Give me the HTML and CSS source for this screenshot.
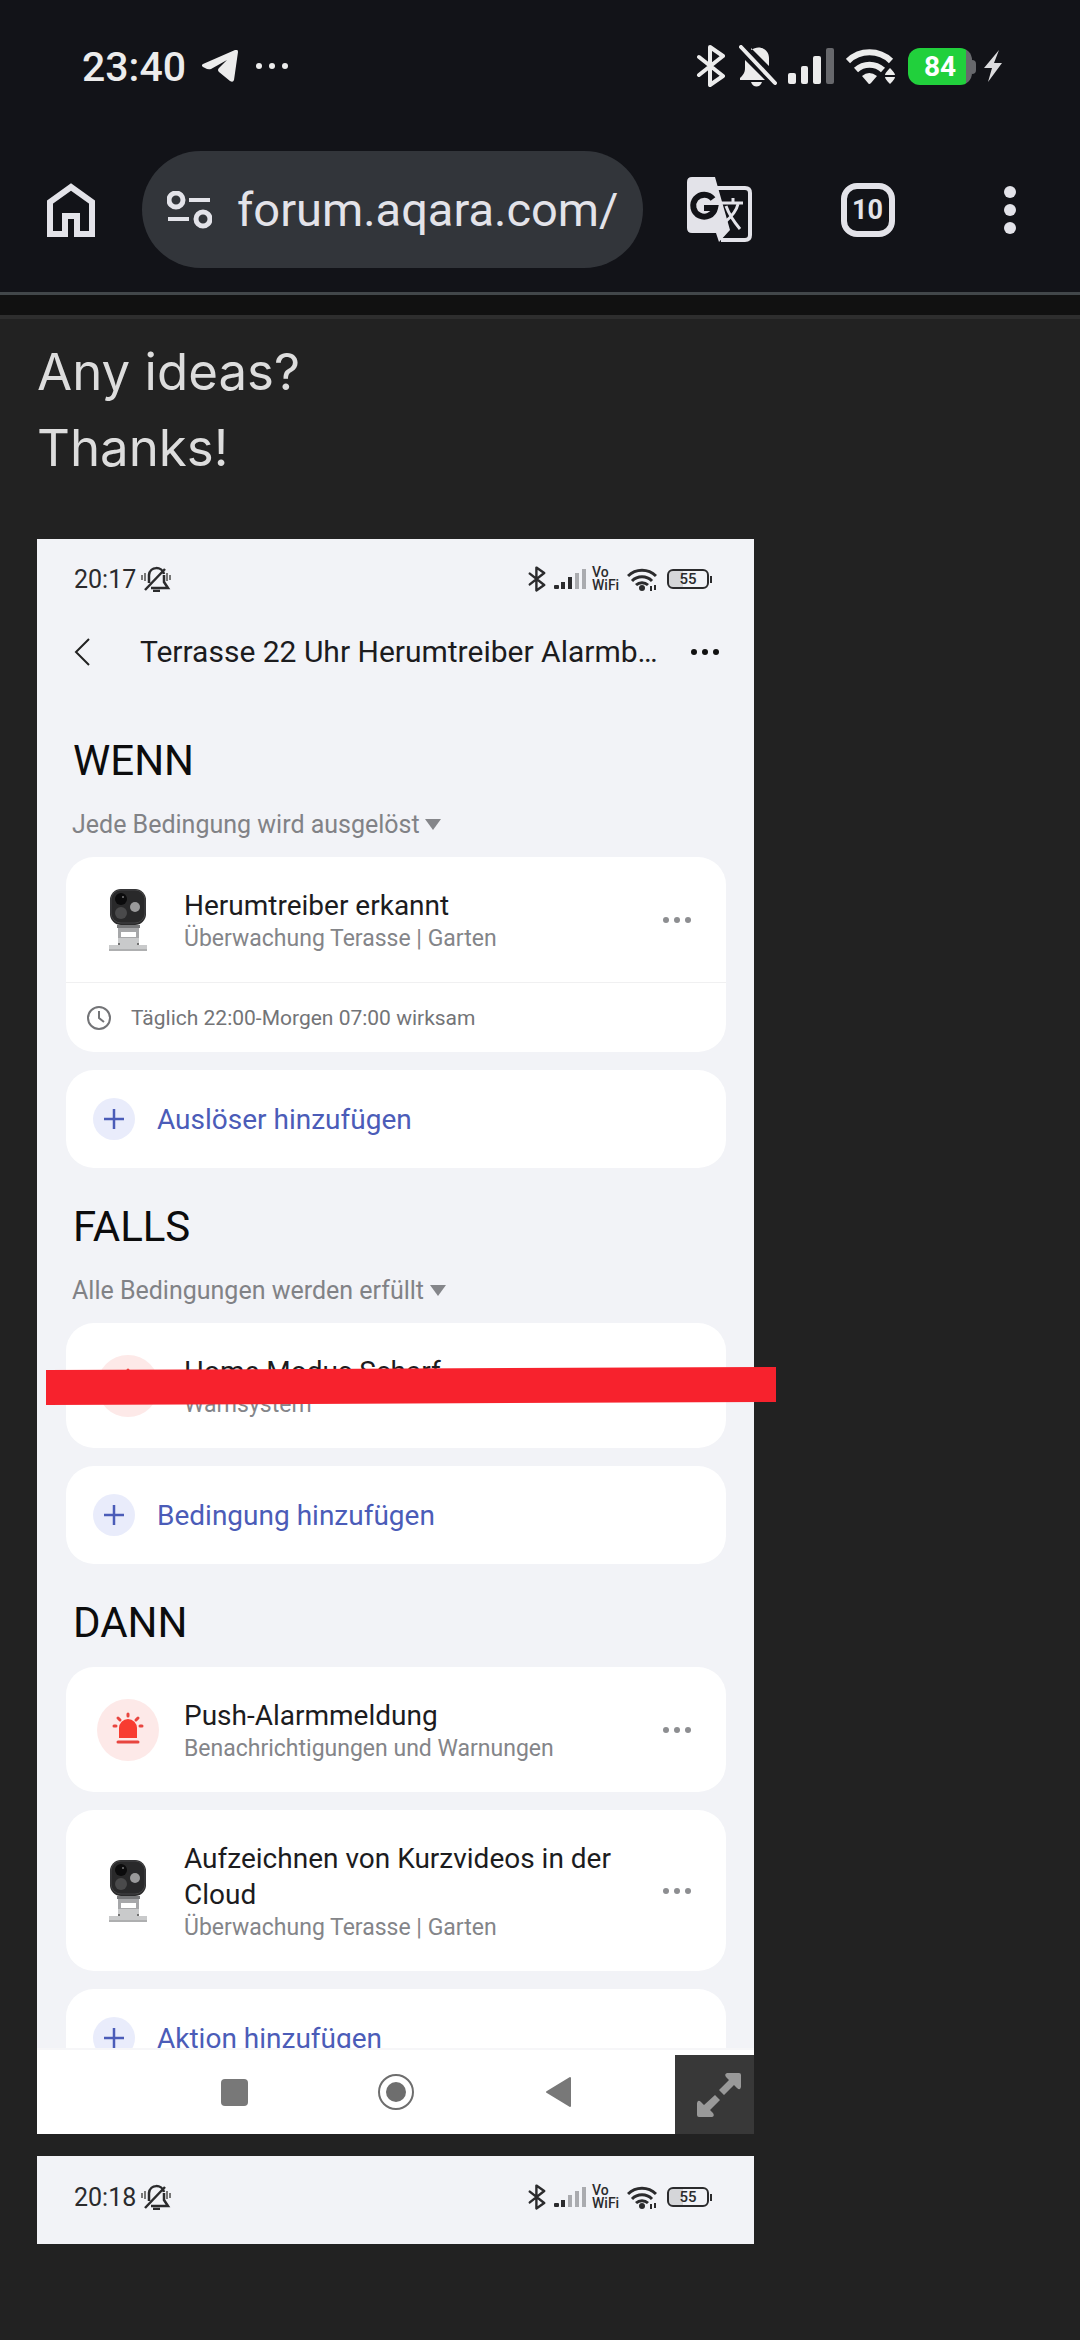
FILE: index.html
```html
<!DOCTYPE html>
<html lang="en">
<head>
<meta charset="utf-8">
<meta name="viewport" content="width=device-width, initial-scale=1">
<title>forum.aqara.com</title>
<link rel="stylesheet" href="styles.css">
</head>
<body>
<svg class="sprite" aria-hidden="true">
  <symbol id="bluetooth" viewBox="0 0 30 42"><path d="M3 12l24 19-13 9V2l13 9L3 30" fill="none" stroke="currentColor" stroke-width="4" stroke-linejoin="round" stroke-linecap="round"/></symbol>
  <symbol id="bell-off" viewBox="0 0 38 42"><path d="M12 5C20-1 30 4 30 13v8L12 3zM6 15l20 20H1v-2c3-3 5-5 5-10zM12 37h11c-2 6-9 6-11 0z" fill="currentColor"/><path d="M2 2l34 36" stroke="currentColor" stroke-width="4" stroke-linecap="round"/></symbol>
  <symbol id="wifi" viewBox="0 0 50 36"><path d="M2 13a31 31 0 0 1 43 0" fill="none" stroke="currentColor" stroke-width="6"/><path d="M10 22a20 20 0 0 1 27 0" fill="none" stroke="currentColor" stroke-width="6"/><path d="M16 28q7-6 15 0l-6 7q-2 2-3 0zM39 27q0-2 5-7 5 5 5 7zM39 29h10q0 2-5 7-5-5-5-7z" fill="currentColor"/></symbol>
  <symbol id="bell-vibrate" viewBox="0 0 30 26"><path d="M8 17V9c1-9 13-9 15-1M24 3L4 24M23 9v7l4 6H10M12 25h7" fill="none" stroke="currentColor" stroke-width="2.5"/><path d="M1 9v5M4 7v8M26 7v8M29 9v5" stroke="#777" stroke-width="2"/></symbol>
  <symbol id="wifi-small" viewBox="0 0 30 23"><path d="M1 8a20 20 0 0 1 28 0M5 13a14 14 0 0 1 20 0M9 17a9 9 0 0 1 12 0" fill="none" stroke="currentColor" stroke-width="3"/><circle cx="15" cy="20" r="3" fill="currentColor"/><path d="M24 18v5M28 17v5" stroke="currentColor" stroke-width="2"/></symbol>
  <symbol id="dots" viewBox="0 0 30 8"><circle cx="4" cy="4" r="3"/><circle cx="15" cy="4" r="3"/><circle cx="26" cy="4" r="3"/></symbol>
  <symbol id="plus" viewBox="0 0 42 42"><circle cx="21" cy="21" r="21" fill="#e9ecfb"/><path d="M11 21h20M21 11v20" stroke="#4b5cb8" stroke-width="2.5"/></symbol>
  <symbol id="caret" viewBox="0 0 16 11"><path d="M0 0h16L8 11z" fill="#85868a"/></symbol>
  <symbol id="camera" viewBox="0 0 38 64">
    <path d="M9 39h21v17H9z" fill="#a6a7a9"/><path d="M12 44h15v5H12z" fill="#fff"/><path d="M8 37h23v3H8z" fill="#77787a"/><path d="M9 50h21v7h8v6H0v-6h9z" fill="#c9cacb"/><path d="M0 61h38v2H0z" fill="#aeafb0"/>
    <circle cx="10" cy="56" r="1" fill="#555"/><circle cx="29" cy="56" r="1" fill="#555"/>
    <rect x="1" y="1" width="36" height="36" rx="11" fill="#29292a"/><rect x="2" y="2" width="34" height="33" rx="10" fill="none" stroke="#454546"/>
    <circle cx="12" cy="11" r="6" fill="#0b0b0c"/><circle cx="14" cy="9" r="1" fill="#777"/><circle cx="12" cy="25" r="6" fill="#4a4a4b"/><circle cx="26" cy="19" r="5" fill="#9a9a9b"/>
  </symbol>
  <symbol id="siren" viewBox="0 0 62 62"><circle cx="31" cy="31" r="31" fill="#fde9e8"/><path d="M22 39V29a9 9 0 0 1 18 0v10z" fill="#f83c31"/><path d="M21 43h20" stroke="#e8453f" stroke-width="3" stroke-linecap="round"/><path d="M31 15v2M21 19l2 2M41 19l-2 2M17 27h2M43 27h2" stroke="#e8453f" stroke-width="3" stroke-linecap="round"/></symbol>
</svg>

<header class="chrome">
  <div class="status">
    <span class="status-time">23:40</span>
    <svg class="i-telegram" viewBox="0 0 36 32"><path d="M1 14L33 0q3-1 3 2l-4 28q-1 3-4 1L17 22q-2-2 0-4l8-8-16 9q-3 1-6-1-5-2-2-4z" fill="currentColor"/></svg>
    <svg class="i-more" viewBox="0 0 34 8"><g fill="currentColor"><circle cx="4" cy="4" r="3"/><circle cx="17" cy="4" r="3"/><circle cx="30" cy="4" r="3"/></g></svg>
    <div class="status-icons">
      <svg class="i-bt"><use href="#bluetooth"/></svg>
      <svg class="i-bell"><use href="#bell-off"/></svg>
      <svg class="i-signal" viewBox="0 0 46 36"><g fill="currentColor"><rect y="25" width="8" height="11" rx="2"/><rect x="13" y="18" width="7" height="18" rx="2"/><rect x="25" y="8" width="8" height="28" rx="2"/><rect x="38" width="8" height="36" rx="2" fill="#67686c"/></g></svg>
      <svg class="i-wifi"><use href="#wifi"/></svg>
      <span class="battery"><span class="battery-level">84</span></span>
      <svg class="i-bolt" viewBox="0 0 20 32"><path d="M16 0L1 18h8L5 32l14-19h-8z" fill="#dcdcde"/></svg>
    </div>
  </div>
  <nav class="toolbar">
    <button class="tool tool-home" aria-label="Home"><svg width="48" height="54" viewBox="0 0 48 54"><path d="M3 51V19L24 4l21 15v32H30V33H18v18z" fill="none" stroke="currentColor" stroke-width="6"/></svg></button>
    <div class="address">
      <button class="tool tool-site" aria-label="Site settings"><svg width="45" height="38" viewBox="0 0 45 38"><g fill="none" stroke="currentColor"><circle cx="9" cy="9" r="7" stroke-width="5"/><circle cx="36" cy="28" r="7" stroke-width="5"/><path d="M22 9h21M1 28h21" stroke-width="4"/></g></svg></button>
      <input class="url" type="text" value="forum.aqara.com/" aria-label="Address">
    </div>
    <button class="tool tool-translate" aria-label="Translate"><svg width="65" height="65" viewBox="0 0 65 65">
      <path d="M30 11h28q5 0 5 5v42q0 5-5 5H34" fill="none" stroke="currentColor" stroke-width="4"/>
      <path d="M5 0h23l15 53-11 12-3-9H5q-5 0-5-5V5q0-5 5-5z" fill="currentColor"/>
      <path d="M26 22a11 11 0 1 0 2 9H17" fill="none" stroke="#121318" stroke-width="6"/>
      <path d="M46 21v5M51 27q-2 9-13 18M39 29q4 11 14 23" fill="none" stroke="currentColor" stroke-width="3"/><path d="M35 26h21" stroke="currentColor" stroke-width="3"/>
    </svg></button>
    <button class="tool tool-tabs" aria-label="Open tabs"><span class="tab-count">10</span></button>
    <button class="tool tool-menu" aria-label="Menu"><svg width="12" height="48" viewBox="0 0 12 48"><g fill="currentColor"><circle cx="6" cy="6" r="6"/><circle cx="6" cy="24" r="6"/><circle cx="6" cy="42" r="6"/></g></svg></button>
  </nav>
</header>

<main class="post">
  <p class="post-text">Any ideas?<br>Thanks!</p>

  <section class="shot">
    <div class="phone-status">
      <span>20:17</span><svg class="p-bell"><use href="#bell-vibrate"/></svg>
      <div class="phone-icons">
        <svg class="p-bt"><use href="#bluetooth"/></svg>
        <svg class="p-signal" viewBox="0 0 32 22"><g fill="#2b2b2d"><rect y="17" width="5" height="4" rx="1"/><rect x="7" y="14" width="4" height="7"/><rect x="14" y="9" width="4" height="12"/><g fill="#aaabaf"><rect x="21" y="5" width="4" height="16"/><rect x="28" y="1" width="4" height="20"/></g></g></svg>
        <span class="vowifi">Vo<br>WiFi</span>
        <svg class="p-wifi"><use href="#wifi-small"/></svg>
        <span class="p-battery">55</span>
      </div>
    </div>
    <div class="phone-title">
      <button class="plain" aria-label="Zurück"><svg width="17" height="30" viewBox="0 0 17 30"><path d="M15 2L2 15l13 13" fill="none" stroke="#222" stroke-width="2"/></svg></button>
      <h1>Terrasse 22 Uhr Herumtreiber Alarmb…</h1>
      <button class="plain more-dark" aria-label="Mehr"><svg class="p-dots"><use href="#dots"/></svg></button>
    </div>

    <div class="rules">
      <h2>WENN</h2>
      <div class="condition"><select aria-label="Auslöser"><option>Jede Bedingung wird ausgelöst</option></select><svg class="p-caret"><use href="#caret"/></svg></div>
      <div class="cards">
        <article class="card">
          <div class="entry">
            <span class="entry-icon"><svg class="p-camera"><use href="#camera"/></svg></span>
            <div class="entry-text"><h3>Herumtreiber erkannt</h3><p>Überwachung Terasse | Garten</p></div>
            <button class="plain" aria-label="Optionen"><svg class="p-dots"><use href="#dots"/></svg></button>
          </div>
          <div class="schedule"><svg width="24" height="24" viewBox="0 0 24 24"><g fill="none" stroke="#737477" stroke-width="2"><circle cx="12" cy="12" r="11"/><path d="M12 5v7l5 4"/></g></svg>Täglich 22:00-Morgen 07:00 wirksam</div>
        </article>
        <button class="card add"><svg class="p-plus"><use href="#plus"/></svg>Auslöser hinzufügen</button>
      </div>

      <h2>FALLS</h2>
      <div class="condition"><select aria-label="Bedingung"><option>Alle Bedingungen werden erfüllt</option></select><svg class="p-caret"><use href="#caret"/></svg></div>
      <div class="cards">
        <article class="card struck">
          <div class="entry">
            <span class="entry-icon"><svg class="p-siren"><use href="#siren"/></svg></span>
            <div class="entry-text"><h3>Home Modus Scharf</h3><p>Warnsystem</p></div>
          </div>
        </article>
        <button class="card add"><svg class="p-plus"><use href="#plus"/></svg>Bedingung hinzufügen</button>
      </div>

      <h2>DANN</h2>
      <div class="cards">
        <article class="card">
          <div class="entry">
            <span class="entry-icon"><svg class="p-siren"><use href="#siren"/></svg></span>
            <div class="entry-text"><h3>Push-Alarmmeldung</h3><p>Benachrichtigungen und Warnungen</p></div>
            <button class="plain" aria-label="Optionen"><svg class="p-dots"><use href="#dots"/></svg></button>
          </div>
        </article>
        <article class="card">
          <div class="entry">
            <span class="entry-icon"><svg class="p-camera"><use href="#camera"/></svg></span>
            <div class="entry-text"><h3>Aufzeichnen von Kurzvideos in der Cloud</h3><p>Überwachung Terasse | Garten</p></div>
            <button class="plain" aria-label="Optionen"><svg class="p-dots"><use href="#dots"/></svg></button>
          </div>
        </article>
        <div class="cutoff"><button class="card add"><svg class="p-plus"><use href="#plus"/></svg>Aktion hinzufügen</button></div>
      </div>
    </div>

    <nav class="phone-nav">
      <button class="plain" aria-label="Übersicht"><svg width="36" height="36" viewBox="0 0 36 36"><rect x="5" y="5" width="27" height="27" rx="4" fill="#787878"/></svg></button>
      <button class="plain" aria-label="Startseite"><svg width="36" height="36" viewBox="0 0 36 36"><circle cx="18" cy="18" r="17" fill="none" stroke="#6e6e6e" stroke-width="2"/><circle cx="18" cy="18" r="10" fill="#6e6e6e"/></svg></button>
      <button class="plain" aria-label="Zurück"><svg width="36" height="36" viewBox="0 0 36 36"><path d="M30 4v28L7 18z" fill="#787878" stroke="#787878" stroke-width="2" stroke-linejoin="round"/></svg></button>
    </nav>
    <button class="expand" aria-label="Expand"><svg width="44" height="44" viewBox="0 0 44 44"><path d="M30 0h12q2 0 2 2v12q-1 4-4 1l-3-3-10 10-5-5L32 7l-3-3q-2-3 1-4zM18 22l5 5-10 10 3 3q2 3-1 4H2q-2 0-2-2V30q1-4 4-1l3 3z" fill="#999"/></svg></button>
  </section>

  <section class="shot">
    <div class="phone-status">
      <span>20:18</span><svg class="p-bell"><use href="#bell-vibrate"/></svg>
      <div class="phone-icons">
        <svg class="p-bt"><use href="#bluetooth"/></svg>
        <svg class="p-signal" viewBox="0 0 32 22"><g fill="#2b2b2d"><rect y="17" width="5" height="4" rx="1"/><rect x="7" y="14" width="4" height="7"/><g fill="#aaabaf"><rect x="14" y="9" width="4" height="12"/><rect x="21" y="5" width="4" height="16"/><rect x="28" y="1" width="4" height="20"/></g></g></svg>
        <span class="vowifi">Vo<br>WiFi</span>
        <svg class="p-wifi"><use href="#wifi-small"/></svg>
        <span class="p-battery">55</span>
      </div>
    </div>
  </section>
</main>
</body>
</html>
```

FILE: styles.css
```css
* { box-sizing: border-box; }
body { margin: 0; min-height: 100vh; background: #222; font-family: Roboto, sans-serif; }
h1, h2, h3, p { margin: 0; font-weight: 400; }
svg { display: block; flex: none; }
button, input, select { font: inherit; color: inherit; background: none; border: 0; padding: 0; margin: 0; }
.sprite { position: absolute; width: 0; height: 0; }

/* Browser chrome */
.chrome { background: #121318; color: #e3e3e9; border-bottom: 3px solid #42474a; padding-bottom: 24px; }
.status { display: flex; align-items: center; height: 132px; padding: 0 77px 0 82px; color: #ececec; }
.status-time { font-size: 41px; font-weight: 500; line-height: 48px; padding-top: 2px; }
.i-telegram { width: 36px; height: 32px; margin-left: 16px; }
.i-more { width: 34px; height: 8px; margin-left: 17px; }
.status-icons { display: flex; align-items: center; margin-left: auto; }
.i-bt { width: 30px; height: 42px; margin-right: 13px; }
.i-bell { width: 38px; height: 42px; margin-right: 11px; }
.i-signal { width: 46px; height: 36px; margin-right: 12px; }
.i-wifi { width: 50px; height: 36px; margin-right: 12px; }
.battery { position: relative; width: 64px; height: 37px; border-radius: 12px; background: linear-gradient(90deg, #21d03c 58px, #67686c 58px); margin-right: 11px; display: flex; }
.battery::after { content: ""; position: absolute; left: 64px; top: 12px; width: 4px; height: 14px; border-radius: 0 4px 4px 0; background: #67686c; }
.battery-level { flex: 1; text-align: center; font-size: 28px; font-weight: 700; line-height: 37px; color: #fff; }
.i-bolt { width: 20px; height: 32px; }
.toolbar { display: flex; align-items: center; margin-top: 19px; }
.tool { display: flex; justify-content: center; align-items: center; }
.tool-home { width: 142px; height: 117px; }
.address { flex: 1; min-width: 0; display: flex; align-items: center; height: 117px; border-radius: 59px; background: #32353a; padding: 0 16px 0 25px; }
.tool-site { margin-right: 25px; }
.url { flex: 1; min-width: 0; font-size: 47px; line-height: 60px; }
.tool-translate { width: 153px; height: 117px; }
.tool-tabs { width: 143px; height: 117px; }
.tab-count { width: 54px; height: 54px; border: 6px solid #e3e3e9; border-radius: 16px; font-size: 27px; font-weight: 700; line-height: 42px; text-align: center; }
.tool-menu { width: 141px; height: 117px; }

/* Forum post */
.post { border-top: 20px solid #111; box-shadow: inset 0 4px 0 #2e2e2e; padding: 19px 37px 96px; display: flex; flex-direction: column; gap: 22px; }
.post-text { font-family: Inter, sans-serif; font-size: 51px; line-height: 76px; color: #ddd; padding-bottom: 31px; }
.shot { position: relative; width: 100%; max-width: 717px; background: #f2f3f7; color: #1c1c1e; }

/* Phone screenshot */
.phone-status { display: flex; align-items: center; height: 80px; padding: 0 41px 0 37px; font-size: 25px; color: #2b2b2d; }
.shot:last-child .phone-status { height: 88px; padding-bottom: 6px; }
.p-bell { width: 30px; height: 26px; margin-left: 5px; }
.phone-icons { display: flex; align-items: center; margin-left: auto; }
.p-bt { width: 18px; height: 26px; margin-right: 8px; }
.p-signal { width: 32px; height: 22px; margin-right: 6px; }
.vowifi { width: 29px; font-size: 14px; font-weight: 500; line-height: 13px; margin-right: 6px; }
.p-wifi { width: 30px; height: 23px; margin-right: 10px; }
.p-battery { position: relative; width: 42px; height: 20px; border: 2px solid #2b2b2d; border-radius: 6px; font-size: 15px; font-weight: 500; line-height: 16px; text-align: center; background: linear-gradient(90deg, #d5d6d9 14px, transparent 14px); margin-right: 4px; }
.p-battery::after { content: ""; position: absolute; right: -5px; top: 5px; width: 2px; height: 7px; background: #2b2b2d; }
.phone-title { display: flex; align-items: center; height: 66px; padding: 0 34px 0 37px; }
.phone-title h1 { flex: 1; margin-left: 49px; font-size: 30px; line-height: 36px; white-space: nowrap; }
.p-dots { width: 30px; height: 8px; fill: #8d8e91; }
.more-dark .p-dots { fill: #111; }
.rules { padding: 52px 28px 0 29px; }
h2 { font-size: 42px; line-height: 48px; margin: 0 0 20px 7px; color: #0c0c0d; }
.cards + h2 { margin-top: 35px; }
.condition { display: flex; align-items: center; gap: 5px; margin: 0 0 14px 6px; font-size: 25px; color: #818286; }
.condition select { appearance: none; height: 38px; }
.p-caret { width: 16px; height: 11px; }
.cards { display: flex; flex-direction: column; gap: 18px; }
.card { width: 100%; border-radius: 28px; background: #fff; }
.entry { display: flex; align-items: center; padding: 29px 34px 29px 31px; }
.entry-icon { display: flex; justify-content: center; width: 62px; margin-right: 25px; }
.entry-text { flex: 1; min-width: 0; padding-top: 2px; }
h3 { font-size: 28px; line-height: 36px; }
.entry-text p { font-size: 23px; line-height: 29px; color: #848589; }
.p-camera { width: 38px; height: 64px; }
.p-siren { width: 62px; height: 62px; }
.schedule { display: flex; align-items: center; gap: 20px; height: 70px; border-top: 1px solid #f0f0f1; padding-left: 21px; font-size: 21px; color: #737477; }
.add { display: flex; align-items: center; gap: 22px; height: 98px; padding-left: 27px; font-size: 28px; color: #4b5cb8; }
.p-plus { width: 42px; height: 42px; }
.struck { position: relative; }
.struck::after { content: ""; position: absolute; left: -20px; right: -50px; top: 44px; height: 38px; background: #f7222d; clip-path: polygon(0 3px, 100% 0, 100% 35px, 0 100%); }
.cutoff { height: 59px; overflow: hidden; }
.phone-nav { display: flex; justify-content: center; align-items: center; gap: 126px; height: 86px; background: #fff; border-top: 2px solid #f6f6f8; }
.expand { position: absolute; right: 0; bottom: 0; width: 79px; height: 79px; padding-left: 8px; background: #383838; display: flex; justify-content: center; align-items: center; }
```
